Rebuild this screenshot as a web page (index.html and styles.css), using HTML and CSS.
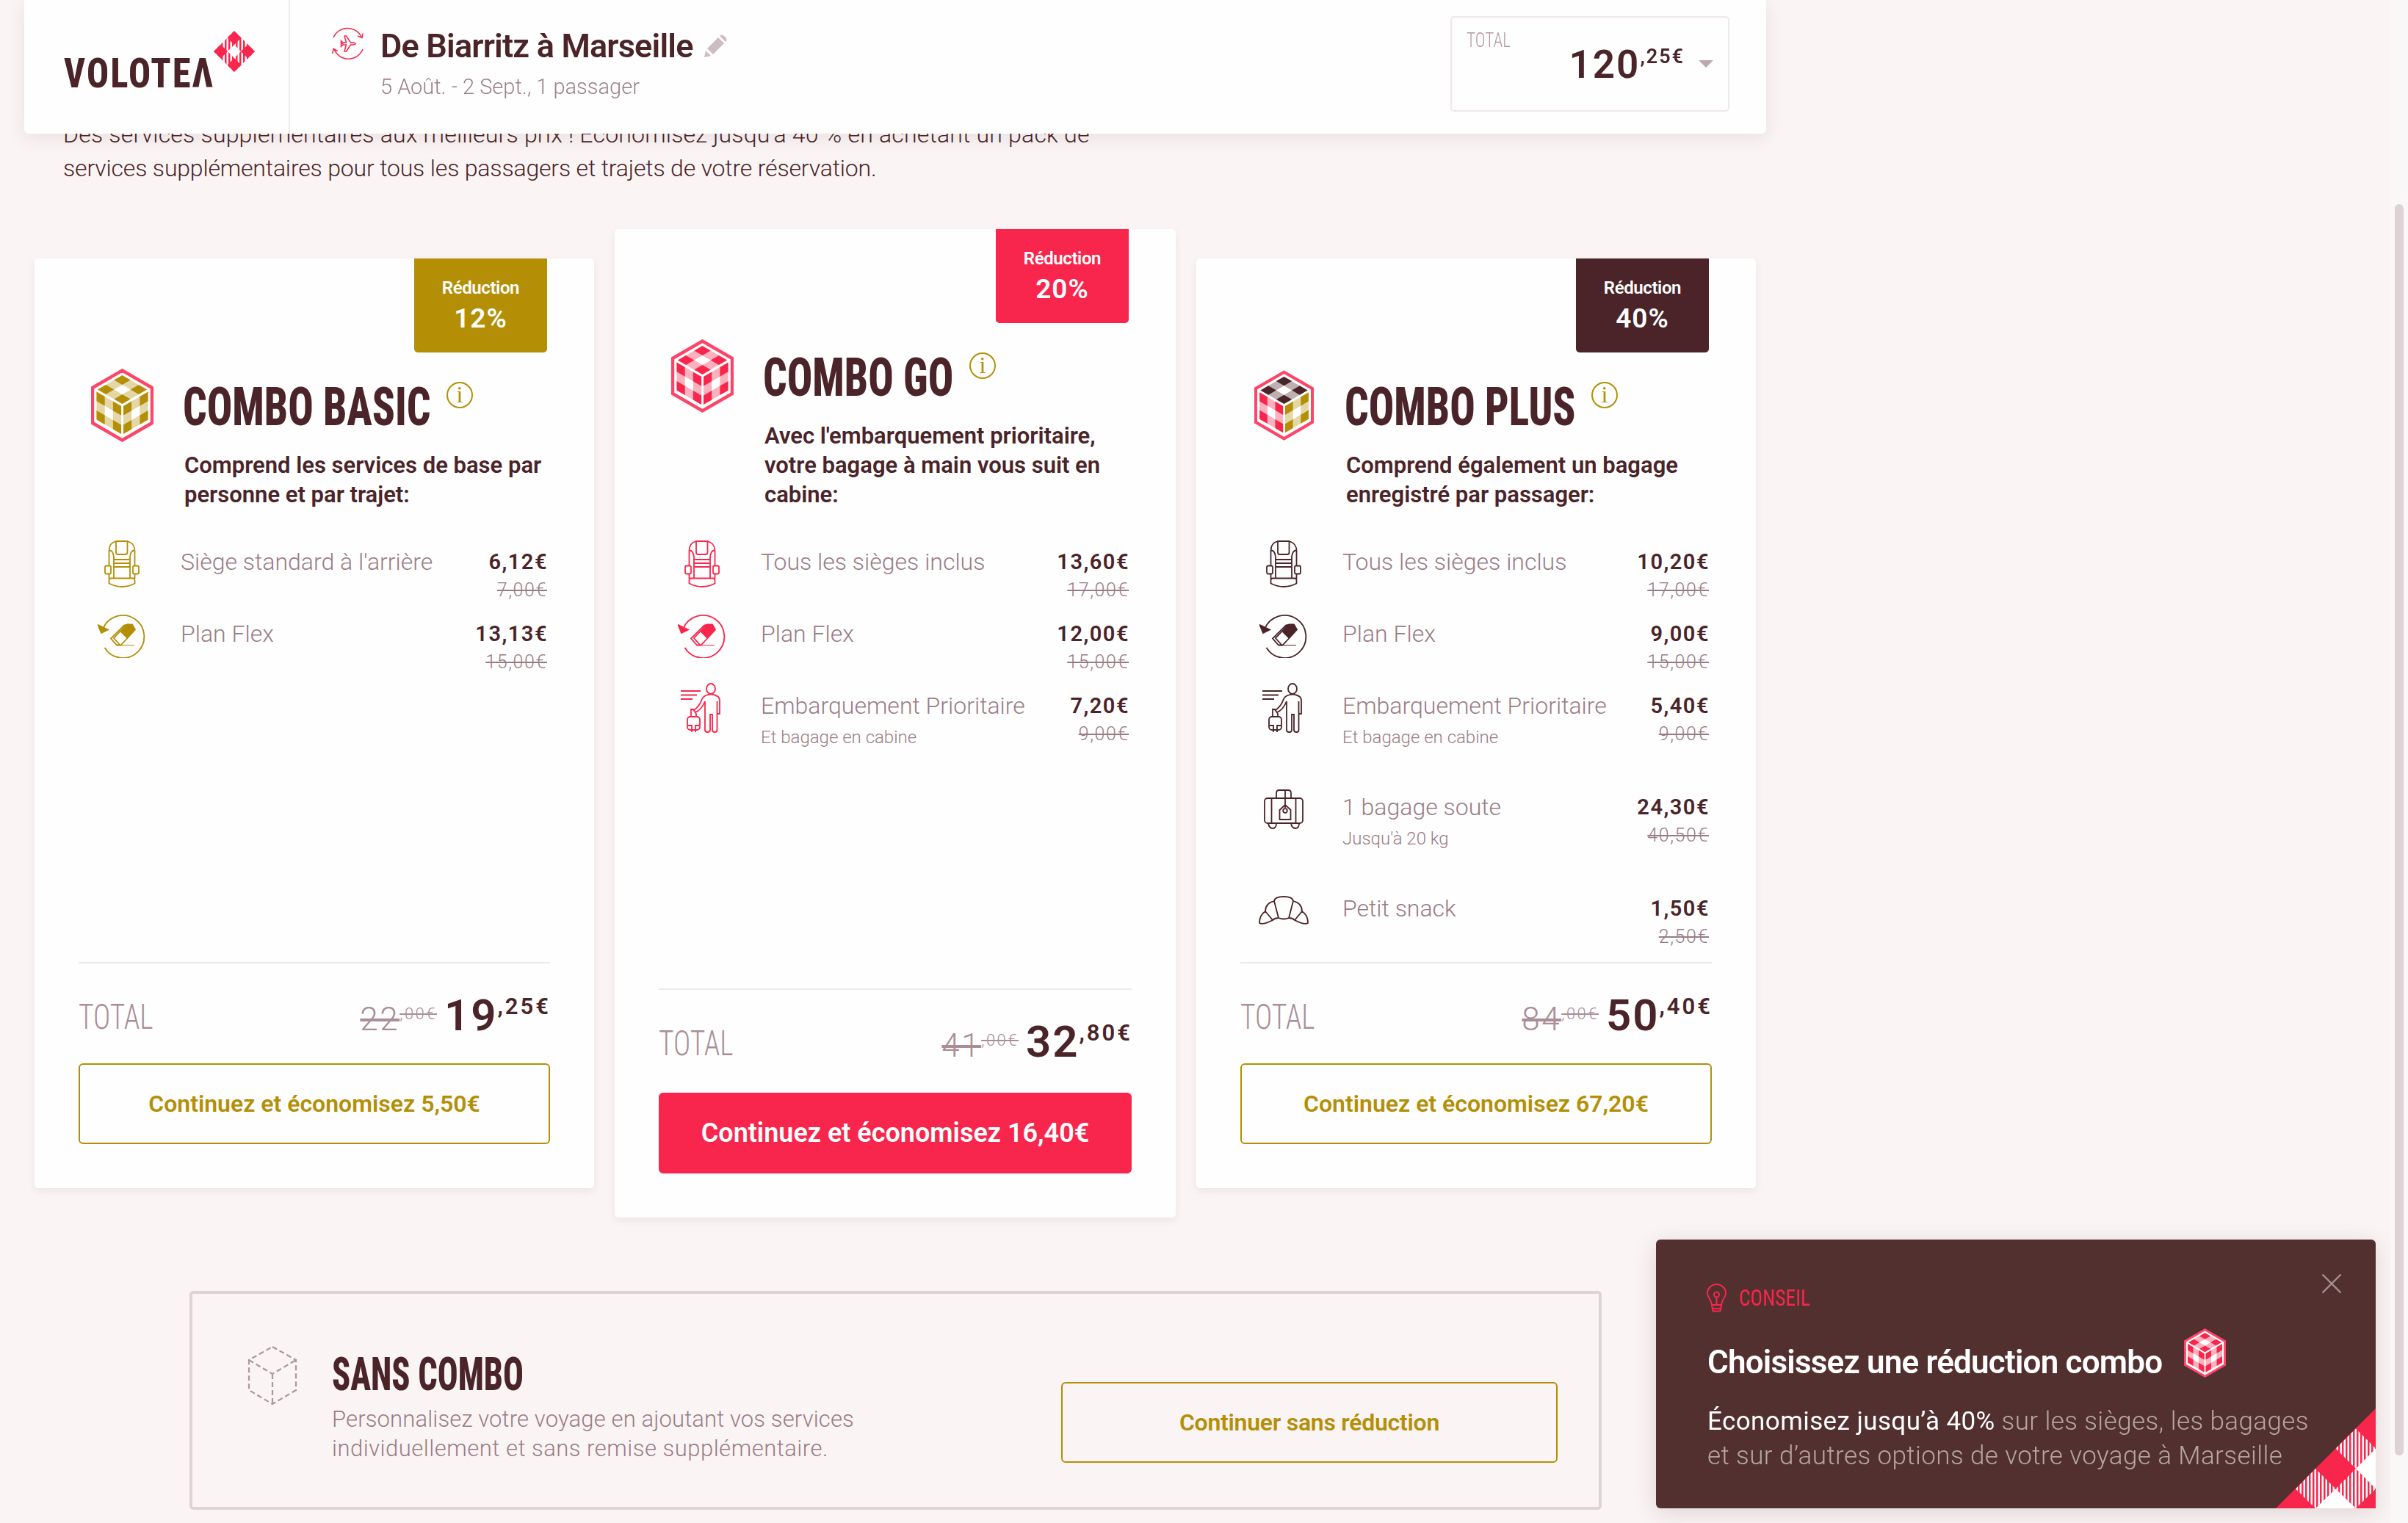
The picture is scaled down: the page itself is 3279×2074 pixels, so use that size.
FILE: index.html
```html
<!DOCTYPE html>
<html lang="fr">
<head>
    <meta charset="UTF-8">
    <title>Volotea - Combos</title>
    <link rel="stylesheet" href="styles.css">
</head>
<body>
    <!-- Icon definitions -->
    <svg class="defs" width="0" height="0">
        <defs>
            <pattern id="stripes" width="5" height="5" patternUnits="userSpaceOnUse">
                <rect width="5" height="5" fill="#fff"/>
                <rect width="2.500" height="5" fill="#f8264c"/>
            </pattern>
            <g id="face">
                <rect width="3" height="3" fill="#fff"/>
                <path d="M0 0h3v3h-3z M1 1v1h1v-1z" fill="currentColor" fill-rule="evenodd" opacity=".36"/>
                <path d="M0 0h1v1h-1z M2 0h1v1h-1z M0 2h1v1h-1z M2 2h1v1h-1z" fill="currentColor"/>
            </g>
            <symbol id="cube-shape" viewBox="0 0 85 100">
                <path d="M42.5 2.5L83 26V74L42.5 97.5L2 74V26Z" fill="#fff" stroke="#fc4568" stroke-width="4.4"/>
                <use href="#face" class="face-top" transform="matrix(11.2 6.5 -11.2 6.5 42.5 9)"/>
                <use href="#face" class="face-left" transform="matrix(11.2 6.5 0 12.7 7.5 31.5)"/>
                <use href="#face" class="face-right" transform="matrix(11.2 -6.5 0 12.7 44 51)"/>
            </symbol>
            <symbol id="seat" viewBox="0 0 48 64">
                <path d="M16 1h15.500v15q0 3-3 3h-10q-2.500 0-2.500-3z M16 1C8 3 6.500 9 6.500 14V34 M31.500 1C39 3 41.500 9 41.500 14V34 M7 13.500q5 0 6 9v29 M41 13.500q-5 0-6 9v29 M13 26h22 M13 31h22 M13 36h22 M6.500 46v6 M41.500 46v6 M9 51.500h30q2.500 0 2.500 3v4q-17 9-35 0v-4q0-3 2.500-3z"/>
                <rect x="1" y="34.500" width="8" height="11" rx="2"/>
                <rect x="39" y="34.500" width="8" height="11" rx="2"/>
            </symbol>
            <symbol id="flex" viewBox="0 0 66 60">
                <path d="M9.500 46A29 29 0 1 0 7.500 20 M41 14.500l-5 1L18 33.500l8 9h5.500l9-9.500 M38 16L22 33l8 9"/>
                <path d="M26 42.700H50" stroke-width="1"/>
                <path class="solid" d="M.5 15L14 21.500L5 26z M32 24.500L41 14.500h6l4 7L40.500 33z"/>
            </symbol>
            <symbol id="boarding" viewBox="0 0 55 69">
                <ellipse cx="41" cy="8" rx="6" ry="7"/>
                <path d="M0 11h27 M0 16.500h22 M0 22h16 M36 16.500Q30 18 28 24Q26 31 17 38 M36 16.500q5-2 10 0Q53 18 53 24V42h-4 M33 25V64q0 3 3.500 3q3.500 0 3.500-3V43h3V64q0 3 3.500 3q3 0 3-3V25 M33 25Q28 37 20 40 M14 46V36h3l4 6v4 M10 58h5v9 M25 58h-5v9"/>
                <rect x="9" y="46" width="17" height="18" rx="4"/>
            </symbol>
            <symbol id="luggage" viewBox="0 0 54 54">
                <rect x="1" y="12" width="52" height="34" rx="4"/>
                <path d="M10.500 12v34 M43.500 12v34 M17 12V5q0-4 4-4h12q4 0 4 4v7 M29 1v24 M21.500 41V28l7.500-7l7.500 7v13z M6 46q1 7 6 7t5-7 M37 46q1 7 6 7t5-7"/>
                <circle cx="29" cy="29" r="2.800"/>
            </symbol>
            <symbol id="croissant" viewBox="0 0 68 40">
                <path d="M21 7Q22 1 34 1Q46 1 47 7L41 30Q34 33 27 30Z M21 7Q9 10 9 21L19 33Q22 30 27 30 M9 21Q1 26 1 37Q6 40 19 33 M47 7Q59 10 59 21L49 33Q46 30 41 30 M59 21Q67 26 67 37Q62 40 49 33"/>
            </symbol>
        </defs>
    </svg>

    <header class="header">
        <div class="logo">
            <span class="logo-text">VOLOTEΛ</span>
            <svg class="logo-mark" viewBox="0 0 56 56">
                <path d="M28 0L56 28L28 56L0 28Z" fill="url(#stripes)"/>
                <path d="M28 19L37 28L28 37L19 28Z" fill="#fff"/>
                <path d="M28 0l9.500 9.500l-9.500 9.500l-9.500-9.500z M28 37l9.500 9.500l-9.500 9.500l-9.500-9.500z M9.500 18.500l9.500 9.500l-9.500 9.500l-9.500-9.500z M46.500 18.500l9.500 9.500l-9.500 9.500l-9.500-9.500z" fill="#f8264c"/>
            </svg>
        </div>
        <svg class="trip-icon" viewBox="0 0 44 44">
            <path d="M2 14A21 21 0 0 1 40 13 M35 12l6 2.500l1-6 M42 30A21 21 0 0 1 3 30 M.700 36l1.500-6.500l5.500 3"/>
            <path d="M12.500 18.500l2.500 2.500h4.500l-2.500-9h2.500l6 9h4q3 1 3 1.500t-3 1.500h-4l-6 9h-2.500l2.500-9h-4.500l-2.500 2.500v-3.500l1.500-.500l-1.500-.500z"/>
        </svg>
        <div class="trip">
            <div class="trip-title"><span>De Biarritz à Marseille</span>
                <svg class="pencil" viewBox="0 0 31 31"><path d="M0 31l2-9l7 7z M4 19L19 4l8 8L12 27z M21 2q3-3 6 0l2 2q3 3 0 6z"/></svg>
            </div>
            <div class="trip-sub">5 Août. - 2 Sept., 1 passager</div>
        </div>
        <div class="basket">
            <span class="basket-label">TOTAL</span>
            <span class="basket-price">120<sup>,25€</sup></span>
            <span class="caret"></span>
        </div>
    </header>

    <main>
        <p class="intro">Des services supplémentaires aux meilleurs prix ! Économisez jusqu'à 40 % en achetant un pack de<br><span class="intro-2">services supplémentaires pour tous les passagers et trajets de votre réservation.</span></p>

        <div class="cards">
            <!-- Combo Basic -->
            <section class="card basic">
                <div class="badge"><span>Réduction</span><b>12%</b></div>
                <div class="card-head">
                    <svg class="cube"><use href="#cube-shape"/></svg>
                    <div class="card-intro">
                        <h2><span>COMBO BASIC</span><i class="info">i</i></h2>
                        <p>Comprend les services de base par<br>personne et par trajet:</p>
                    </div>
                </div>
                <ul class="services">
                    <li><svg class="icon"><use href="#seat" x="10" y="2" width="48" height="64"/></svg>
                        <div class="label">Siège standard à l'arrière</div>
                        <div class="price"><b>6,12€</b><s>7,00€</s></div></li>
                    <li><svg class="icon"><use href="#flex" x="1" y="4" width="66" height="60"/></svg>
                        <div class="label">Plan Flex</div>
                        <div class="price"><b>13,13€</b><s>15,00€</s></div></li>
                </ul>
                <div class="card-foot">
                    <div class="total">
                        <span class="total-label">TOTAL</span>
                        <span class="before"><s>22</s><sup>,00€</sup></span>
                        <span class="after">19<sup>,25€</sup></span>
                    </div>
                    <button class="btn">Continuez et économisez 5,50€</button>
                </div>
            </section>

            <!-- Combo Go -->
            <section class="card go">
                <div class="badge"><span>Réduction</span><b>20%</b></div>
                <div class="card-head">
                    <svg class="cube"><use href="#cube-shape"/></svg>
                    <div class="card-intro">
                        <h2><span>COMBO GO</span><i class="info">i</i></h2>
                        <p>Avec l'embarquement prioritaire,<br>votre bagage à main vous suit en<br>cabine:</p>
                    </div>
                </div>
                <ul class="services">
                    <li><svg class="icon"><use href="#seat" x="10" y="2" width="48" height="64"/></svg>
                        <div class="label">Tous les sièges inclus</div>
                        <div class="price"><b>13,60€</b><s>17,00€</s></div></li>
                    <li><svg class="icon"><use href="#flex" x="1" y="4" width="66" height="60"/></svg>
                        <div class="label">Plan Flex</div>
                        <div class="price"><b>12,00€</b><s>15,00€</s></div></li>
                    <li class="tall"><svg class="icon"><use href="#boarding" x="5" y="0" width="55" height="69"/></svg>
                        <div class="label">Embarquement Prioritaire<small>Et bagage en cabine</small></div>
                        <div class="price"><b>7,20€</b><s>9,00€</s></div></li>
                </ul>
                <div class="card-foot">
                    <div class="total">
                        <span class="total-label">TOTAL</span>
                        <span class="before"><s>41</s><sup>,00€</sup></span>
                        <span class="after">32<sup>,80€</sup></span>
                    </div>
                    <button class="btn btn-main">Continuez et économisez 16,40€</button>
                </div>
            </section>

            <!-- Combo Plus -->
            <section class="card plus">
                <div class="badge"><span>Réduction</span><b>40%</b></div>
                <div class="card-head">
                    <svg class="cube"><use href="#cube-shape"/></svg>
                    <div class="card-intro">
                        <h2><span>COMBO PLUS</span><i class="info">i</i></h2>
                        <p>Comprend également un bagage<br>enregistré par passager:</p>
                    </div>
                </div>
                <ul class="services">
                    <li><svg class="icon"><use href="#seat" x="10" y="2" width="48" height="64"/></svg>
                        <div class="label">Tous les sièges inclus</div>
                        <div class="price"><b>10,20€</b><s>17,00€</s></div></li>
                    <li><svg class="icon"><use href="#flex" x="1" y="4" width="66" height="60"/></svg>
                        <div class="label">Plan Flex</div>
                        <div class="price"><b>9,00€</b><s>15,00€</s></div></li>
                    <li class="tall"><svg class="icon"><use href="#boarding" x="5" y="0" width="55" height="69"/></svg>
                        <div class="label">Embarquement Prioritaire<small>Et bagage en cabine</small></div>
                        <div class="price"><b>5,40€</b><s>9,00€</s></div></li>
                    <li class="tall"><svg class="icon"><use href="#luggage" x="7" y="7" width="54" height="54"/></svg>
                        <div class="label">1 bagage soute<small>Jusqu'à 20 kg</small></div>
                        <div class="price"><b>24,30€</b><s>40,50€</s></div></li>
                    <li><svg class="icon"><use href="#croissant" x="0" y="14" width="68" height="40"/></svg>
                        <div class="label">Petit snack</div>
                        <div class="price"><b>1,50€</b><s>2,50€</s></div></li>
                </ul>
                <div class="card-foot">
                    <div class="total">
                        <span class="total-label">TOTAL</span>
                        <span class="before"><s>84</s><sup>,00€</sup></span>
                        <span class="after">50<sup>,40€</sup></span>
                    </div>
                    <button class="btn">Continuez et économisez 67,20€</button>
                </div>
            </section>
        </div>

        <section class="no-combo">
            <svg class="no-combo-icon" viewBox="0 0 68 82">
                <path d="M34 2L66 20V61L34 80L2 61V20L34 2 M2 20L34 39L66 20 M34 39V80"/>
            </svg>
            <div class="no-combo-text">
                <h2><span>SANS COMBO</span></h2>
                <p>Personnalisez votre voyage en ajoutant vos services<br><span class="line-2">individuellement et sans remise supplémentaire.</span></p>
            </div>
            <button class="btn">Continuer sans réduction</button>
        </section>
    </main>

    <!-- Tip box -->
    <aside class="tip">
        <svg class="tip-close" viewBox="0 0 28 28"><path d="M1.500 1.500l25 25 M26.500 1.500l-25 25"/></svg>
        <div class="tip-tag">
            <svg class="bulb" viewBox="0 0 27 39"><path d="M7 29Q6 23 3 19Q1 16 1 13A12.500 12 0 0 1 26 13Q26 16 24 19Q21 23 20 29z M7 29l1.500 8.500h10l1.500-8.500 M8 34h11.500 M13.500 18.500V29"/><circle cx="13.500" cy="15" r="3.500"/></svg>
            <span>CONSEIL</span>
        </div>
        <div class="tip-title"><span>Choisissez une réduction combo</span><svg class="cube go"><use href="#cube-shape"/></svg></div>
        <p><b>Économisez jusqu’à 40%</b> sur les sièges, les bagages<br>et sur d’autres options de votre voyage à Marseille</p>
        <svg class="tip-corner" viewBox="0 0 136 136">
            <path d="M136 0V136H0z" fill="#f8264c"/>
            <path d="M109 27.500l27 27l-27 27.500l-27.500-27.500z M54 82l27.500 27.500l-27.500 26.500l-27-26.500z M109 82l27 27.500l-27 26.500l-27.500-26.500z" fill="url(#stripes)"/>
            <path d="M136 54.500v55l-27-27.500z M81.500 109.500l27.500 26.500h-55z" fill="#fff"/>
        </svg>
    </aside>

    <div class="scrollbar"><div class="thumb"></div></div>
</body>
</html>
```
FILE: styles.css
```css
/* General styles */
* {
    box-sizing: border-box;
}

body {
    margin: 0;
    height: 2074px;
    overflow: hidden;
    background-color: #faf4f4;
    color: #4a2428;
    font-family: Roboto, Arial, sans-serif;
}

h2, p, ul {
    margin: 0;
    padding: 0;
}

.defs {
    position: absolute;
}

/* Header */
.header {
    position: fixed;
    top: 0;
    left: 33px;
    z-index: 2;
    display: flex;
    width: 2372px;
    height: 182px;
    background-color: #fefefe;
    border-radius: 0 0 6px 6px;
    box-shadow: 0 6px 24px rgba(77, 35, 40, 0.09);
}

.logo {
    display: flex;
    width: 362px;
    padding-left: 54px;
    border-right: 2px solid #efe8ea;
}

.logo-text {
    width: 204px;
    margin-top: 70px;
    font-size: 56px;
    line-height: 60px;
    font-weight: 800;
    font-stretch: 75%;
    letter-spacing: 2.5px;
    transform: scaleX(0.893);
    transform-origin: left;
}

.logo-mark {
    width: 56px;
    height: 56px;
    margin-top: 42px;
}

.trip-icon {
    width: 44px;
    height: 44px;
    margin: 37px 22px 0 57px;
    fill: none;
    stroke: #f8264c;
    stroke-width: 1.5;
}

.trip-title {
    display: flex;
    margin-top: 35px;
    font-size: 45px;
    line-height: 56px;
    font-weight: 600;
    letter-spacing: -0.8px;
}

.trip-title span {
    width: 441px;
    white-space: nowrap;
}

.pencil {
    width: 31px;
    height: 31px;
    margin-top: 12px;
    fill: #cdbcc2;
}

.trip-sub {
    margin-top: 7px;
    font-size: 29px;
    line-height: 40px;
    font-weight: 300;
    color: #9c7f88;
}

.basket {
    display: flex;
    width: 380px;
    height: 130px;
    margin: 22px 50px 0 auto;
    padding: 0 20px;
    border: 2px solid #efe8ea;
    border-radius: 5px;
}

.basket-label {
    margin-top: 15px;
    font-size: 28px;
    line-height: 32px;
    font-weight: 300;
    font-stretch: 75%;
    color: #b39aa2;
    transform: scaleX(0.83);
    transform-origin: left;
}

.basket-price {
    margin-top: 32px;
    margin-left: auto;
    font-size: 53px;
    line-height: 64px;
    font-weight: 600;
    letter-spacing: 2px;
}

sup {
    line-height: 0;
}

.basket-price sup {
    font-size: 27px;
    vertical-align: 20px;
}

.caret {
    margin: 58px 0 0 19px;
    width: 20px;
    height: 10px;
    background-color: #bda8af;
    clip-path: polygon(0 0, 100% 0, 50% 100%);
}

/* Intro */
.intro {
    padding: 160px 0 60px 86px;
    font-size: 32px;
    line-height: 46px;
    font-weight: 300;
    letter-spacing: 0.19px;
    white-space: nowrap;
}

.intro-2 {
    letter-spacing: -0.18px;
}

/* Cards */
.cards {
    display: flex;
    align-items: center;
    gap: 28px;
    padding-left: 47px;
}

.card {
    position: relative;
    display: flex;
    flex-direction: column;
    width: 762px;
    height: 1266px;
    padding: 150px 60px 60px;
    background-color: #fefefe;
    border-radius: 5px;
    box-shadow: 0 4px 12px rgba(77, 35, 40, 0.07);
}

.card.go {
    width: 764px;
    height: 1346px;
}

.basic {
    --accent: #b48f06;
    --top: #b48f06;
    --left: #b48f06;
    --right: #b48f06;
    --name-width: 332px;
}

.go {
    --accent: #f8264c;
    --top: #f8264c;
    --left: #f8264c;
    --right: #f8264c;
    --name-width: 254px;
}

.plus {
    --accent: #4a2428;
    --top: #4a2428;
    --left: #f8264c;
    --right: #b48f06;
    --name-width: 309px;
}

.face-top {
    color: var(--top);
}

.face-left {
    color: var(--left);
}

.face-right {
    color: var(--right);
}

.badge {
    position: absolute;
    top: 0;
    right: 64px;
    width: 181px;
    height: 128px;
    padding-top: 24px;
    background-color: var(--accent);
    border-radius: 0 0 5px 5px;
    color: #fff;
    text-align: center;
}

.badge span {
    display: block;
    font-size: 24px;
    line-height: 32px;
    font-weight: 600;
    letter-spacing: -0.4px;
}

.badge b {
    display: block;
    margin-top: 4px;
    font-size: 37px;
    line-height: 44px;
    font-weight: 600;
    letter-spacing: 1px;
}

.card-head {
    display: flex;
    gap: 42px;
    padding-left: 17px;
}

.cube {
    flex-shrink: 0;
    width: 85px;
    height: 100px;
}

.plus .cube {
    width: 81px;
    height: 96px;
    margin: 2px 2px 0;
}

.card h2 {
    display: flex;
    margin-top: 12px;
}

h2 span {
    display: block;
    font-size: 73px;
    line-height: 80px;
    font-weight: 800;
    font-stretch: 75%;
    white-space: nowrap;
    transform: scaleX(0.785);
    transform-origin: left;
}

.card h2 span {
    width: var(--name-width);
    margin-left: -2px;
}

.info {
    width: 36px;
    height: 36px;
    margin: 6px 0 0 27px;
    border: 2.5px solid #b48f06;
    border-radius: 50%;
    color: #b48f06;
    font: 32px/30px "Liberation Serif", serif;
    text-align: center;
}

.card-intro p {
    margin-top: 20px;
    font-size: 31px;
    line-height: 40px;
    font-weight: 600;
    white-space: nowrap;
}

.services {
    margin-top: 51px;
    padding: 0 4px 0 25px;
    list-style: none;
}

.services li {
    display: flex;
    height: 98px;
}

.services li.tall {
    height: 138px;
}

.services li:last-child {
    height: 80px;
}

.icon {
    width: 68px;
    height: 70px;
    margin: -11px 46px 0 0;
    fill: none;
    stroke: var(--accent);
    stroke-width: 1.8;
}

.solid {
    fill: var(--accent);
}

.label {
    font-size: 32px;
    line-height: 40px;
    font-weight: 300;
    color: #9a7c85;
    white-space: nowrap;
}

.label small {
    display: block;
    margin-top: 5px;
    font-size: 24px;
    line-height: 36px;
}

.price {
    margin-left: auto;
    text-align: right;
}

.price b {
    display: block;
    margin-right: -1px;
    font-size: 29px;
    line-height: 40px;
    font-weight: 600;
    letter-spacing: 1.5px;
}

.price s {
    display: block;
    margin-top: 1px;
    font-size: 25px;
    line-height: 36px;
    font-weight: 300;
    letter-spacing: 1.6px;
    color: #9a7c85;
}

.card-foot {
    margin-top: auto;
    border-top: 2px solid #efe8ea;
}

.total {
    display: flex;
    align-items: baseline;
    height: 136px;
    padding-top: 36px;
    line-height: 70px;
}

.go .total {
    height: 140px;
}

.total-label {
    margin-right: auto;
    font-size: 48px;
    font-weight: 300;
    font-stretch: 75%;
    color: #a98e97;
    transform: translateY(-2px) scaleX(0.82);
    transform-origin: left;
}

.before {
    font-size: 44px;
    font-weight: 300;
    letter-spacing: 2.5px;
    color: #a98e97;
}

.before sup {
    font-size: 22px;
    vertical-align: 15px;
    text-decoration: line-through;
}

.after {
    margin: 0 -1px 0 10px;
    font-size: 60px;
    font-weight: 600;
    letter-spacing: 2px;
}

.after sup {
    font-size: 31px;
    vertical-align: 22px;
    letter-spacing: 3px;
}

.btn {
    display: block;
    width: 100%;
    height: 110px;
    border: 2px solid #b48f06;
    border-radius: 6px;
    background: none;
    color: #b48f06;
    font: 600 32px/40px Roboto, Arial, sans-serif;
}

.btn-main {
    border-color: #f8264c;
    background-color: #f8264c;
    color: #fff;
    font-size: 36px;
}

/* No combo */
.no-combo {
    display: flex;
    width: 1923px;
    height: 298px;
    margin: 100px 0 0 258px;
    padding: 0 56px 0 75px;
    border: 4px solid #dfd3d5;
    border-radius: 5px;
}

.no-combo-icon {
    width: 68px;
    height: 82px;
    margin: 70px 47px 0 0;
    fill: none;
    stroke: #ae969e;
    stroke-width: 2.2;
    stroke-dasharray: 7 4;
}

.no-combo h2 {
    height: 64px;
    margin-top: 78px;
}

.no-combo h2 span {
    width: 260px;
    font-size: 63px;
    line-height: 64px;
    transform: scaleX(0.735);
}

.no-combo p {
    margin-top: 9px;
    font-size: 31px;
    line-height: 40px;
    font-weight: 300;
    letter-spacing: 0.13px;
    color: #9a7c85;
}

.no-combo .line-2 {
    letter-spacing: 0.5px;
}

.no-combo .btn {
    width: 676px;
    margin: 120px 0 0 auto;
    letter-spacing: -0.26px;
}

/* Tip */
.tip {
    position: fixed;
    left: 2255px;
    top: 1688px;
    width: 980px;
    height: 366px;
    padding: 59px 70px 0;
    background-color: #533030;
    border-radius: 6px;
    box-shadow: 0 6px 30px rgba(77, 35, 40, 0.15);
    color: #b5a6a2;
}

.tip-close {
    position: absolute;
    top: 46px;
    right: 46px;
    width: 28px;
    height: 28px;
    stroke: #a39391;
    stroke-width: 2.4;
}

.tip-tag {
    display: flex;
    height: 40px;
    color: #f8264c;
    font-size: 32px;
    line-height: 40px;
    font-weight: 400;
    font-stretch: 75%;
}

.tip-tag span {
    transform: scaleX(0.86);
    transform-origin: left;
}

.bulb {
    width: 27px;
    height: 39px;
    margin: 1px 17px 0 -1px;
    fill: none;
    stroke: #f8264c;
    stroke-width: 2;
}

.tip-title {
    display: flex;
    height: 66px;
    margin-top: 22px;
    color: #fff;
    font-size: 44px;
    line-height: 60px;
    font-weight: 600;
    letter-spacing: -0.8px;
    white-space: nowrap;
}

.tip-title span {
    width: 649px;
    margin-top: 16px;
}

.tip-title .cube {
    width: 57px;
    height: 67px;
}

.tip p {
    margin-top: 37px;
    font-size: 35px;
    line-height: 47px;
    font-weight: 300;
    letter-spacing: 0.4px;
    white-space: nowrap;
}

.tip p b {
    color: #fff;
    font-weight: 400;
}

.tip-corner {
    position: absolute;
    right: 0;
    bottom: 0;
    width: 136px;
    height: 136px;
}

/* Scrollbar */
.scrollbar {
    position: fixed;
    top: 0;
    right: 0;
    width: 24px;
    height: 2074px;
    background-color: #faf7f9;
}

.thumb {
    width: 12px;
    height: 1704px;
    margin: 278px 0 0 6px;
    border-radius: 6px;
    background-color: #ddd2d6;
}
```
